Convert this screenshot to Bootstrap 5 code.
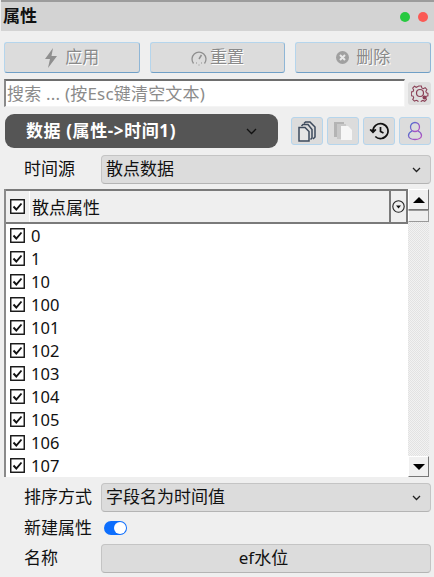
<!DOCTYPE html>
<html lang="zh">
<head>
    <meta charset="UTF-8">
    <meta name="viewport" content="width=device-width, initial-scale=1.0">
    <title>属性</title>
    <link href="https://cdn.jsdelivr.net/npm/bootstrap@5.3.0/dist/css/bootstrap.min.css" rel="stylesheet">
    <style>
        html, body {
            height: 577px;
            overflow: hidden;
        }
        body {
            font-family: "Noto Sans", "Noto Sans CJK SC", sans-serif;
            font-size: 17px;
            line-height: 1.2;
            background: #efefef;
            color: #111;
        }
        .panel-title {
            height: 31px;
            margin-left: 1px;
            padding-left: 2px;
            padding-right: 6px;
            background: #d3d3d3;
            border-top: 2px solid #9c9c9c;
            font-weight: 700;
            font-size: 17px;
        }
        .dot-group {
            gap: 8px;
        }
        .dot {
            width: 10px;
            height: 10px;
            border-radius: 50%;
        }
        .dot-green { background: #27c940; }
        .dot-red { background: #fb5a55; }
        .action-row {
            padding: 11px 3px 0 4px;
            gap: 10px;
        }
        .action-btn {
            flex: 1 1 0;
            height: 31px;
            background: #dcdcdc;
            border: 1px solid #b5d5ec;
            border-bottom-color: #6f9fc6;
            border-right-color: #8fb6d6;
            border-radius: 3px;
            color: #8a8a8a;
            font-size: 17px;
            gap: 7px;
            text-shadow: 1px 1px 0 #fff;
        }
        .action-btn.tight {
            gap: 3px;
        }
        .search-row {
            padding: 6px 3px 0 4px;
            gap: 3px;
        }
        .search-box {
            width: 401px;
            height: 28px;
            background: #fff;
            border: 1px solid #f4f4f4;
            border-top: 2px solid #6e6e6e;
            border-left: 2px solid #8a8a8a;
            padding-left: 1px;
            color: #8b8b8b;
            font-size: 17px;
            letter-spacing: .2px;
            line-height: 25px;
            white-space: nowrap;
        }
        .gear-btn {
            width: 23px;
            height: 23px;
            background: #dedede;
            border-radius: 3px;
        }
        .data-row {
            padding: 7px 3px 0 5px;
        }
        .data-pill {
            width: 273px;
            height: 34px;
            background: #555;
            border-radius: 9px;
            color: #fff;
            font-weight: 700;
            font-size: 17px;
            letter-spacing: .6px;
            padding-left: 21px;
            padding-right: 21px;
        }
        .icon-group {
            gap: 4px;
            margin-top: 3px;
            margin-left: 13px;
        }
        .icon-btn {
            width: 32px;
            height: 28px;
            background: #dcdcdc;
            border: 1px solid #b5d5ec;
            border-radius: 3px;
        }
        .field-row {
            padding-left: 24px;
            padding-right: 3px;
        }
        .field-label {
            width: 77px;
            flex: none;
            font-size: 17px;
        }
        .field-value {
            flex: 1;
            height: 29px;
            background: #dcdcdc;
            border: 1px solid #c4c4c4;
            border-bottom-color: #b4b4b4;
            border-radius: 4px;
            padding-left: 4px;
            padding-right: 9px;
            font-size: 17px;
        }
        .time-row {
            margin-top: 7px;
        }
        .sort-row {
            margin-top: 6px;
        }
        .toggle-row {
            height: 32px;
        }
        .attr-table {
            margin-top: 5px;
            margin-left: 4px;
            margin-right: 5px;
            height: 288px;
            overflow: hidden;
        }
        .attr-main {
            width: 404px;
            flex: none;
            background: #fff;
            border-left: 2px solid #8a8a8a;
        }
        .attr-head {
            height: 35px;
            background: #efefef;
            border-top: 2px solid #7a7a7a;
            border-bottom: 2px solid #7a7a7a;
            border-right: 2px solid #7a7a7a;
        }
        .head-check {
            width: 24px;
            height: 100%;
            padding-left: 4px;
            border-right: 1px solid #fff;
        }
        .head-text {
            flex: 1;
            padding-left: 2px;
            padding-top: 3px;
        }
        .head-menu {
            width: 17px;
            height: 100%;
            border-left: 2px solid #7a7a7a;
        }
        .attr-rows {
            height: 253px;
        }
        .attr-row {
            height: 23px;
            padding-left: 4px;
            gap: 6px;
            font-size: 16.500px;
        }
        .tick {
            width: 15px;
            height: 15px;
            flex: none;
            display: block;
        }
        .attr-scroll {
            width: 21px;
            flex: none;
            background-color: #f2f2f2;
            background-image: linear-gradient(45deg, #e2e2e2 25%, transparent 25%, transparent 75%, #e2e2e2 75%), linear-gradient(45deg, #e2e2e2 25%, transparent 25%, transparent 75%, #e2e2e2 75%);
            background-size: 2px 2px;
            background-position: 0 0, 1px 1px;
        }
        .scroll-btn {
            height: 21px;
            background: #f0f0f0;
            border: 1px solid #fff;
            border-right-color: #777;
            border-bottom-color: #777;
            font-size: 0;
        }
        .scroll-thumb {
            height: 12px;
            background: #efefef;
            border: 1px solid #fff;
            border-bottom-color: #999;
            border-right-color: #999;
            border-top-color: #999;
        }
        .tri-up {
            border-left: 6px solid transparent;
            border-right: 6px solid transparent;
            border-bottom: 6px solid #000;
        }
        .tri-down {
            border-left: 6px solid transparent;
            border-right: 6px solid transparent;
            border-top: 6px solid #000;
        }
        .toggle-track {
            width: 23px;
            height: 14px;
            margin-left: 3px;
            background: #0d6efd;
            border-radius: 7px;
            padding-right: 1px;
        }
        .toggle-knob {
            width: 12px;
            height: 12px;
            background: #fff;
            border-radius: 50%;
        }
    </style>
</head>

<body>
    <!-- Title -->
    <div class="panel-title d-flex align-items-center justify-content-between">
        <span>属性</span>
        <span class="dot-group d-flex">
            <span class="dot dot-green"></span>
            <span class="dot dot-red"></span>
        </span>
    </div>

    <!-- Actions -->
    <div class="action-row d-flex">
        <div class="action-btn d-flex align-items-center justify-content-center">
            <svg width="14" height="20" viewBox="0 0 14 20"><path d="M9 0 1 11h5l-2 9 9-12H7.500z" fill="#8f8f8f"/></svg>
            <span>应用</span>
        </div>
        <div class="action-btn tight d-flex align-items-center justify-content-center">
            <svg width="16" height="16" viewBox="0 0 16 16" fill="none" stroke="#8f8f8f"><path d="M2.500 13.500A7 7 0 1 1 13.500 13.500" stroke-width="1.300"/><path d="M8 9 10.500 5" stroke-width="1.500"/><path d="M5 13h1M7.500 15h1M10 13h1" stroke-width="1.200"/></svg>
            <span>重置</span>
        </div>
        <div class="action-btn d-flex align-items-center justify-content-center">
            <svg width="13" height="13" viewBox="0 0 13 13"><circle cx="6.500" cy="6.500" r="6.500" fill="#a0a0a0"/><path d="M4 4l5 5M9 4l-5 5" stroke="#e8e8e8" stroke-width="2"/></svg>
            <span>删除</span>
        </div>
    </div>

    <!-- Search -->
    <div class="search-row d-flex align-items-center">
        <div class="search-box">搜索 ... (按Esc键清空文本)</div>
        <div class="gear-btn d-flex align-items-center justify-content-center">
            <svg width="18" height="18" viewBox="0 0 18 18" fill="none" stroke="#8a3f55" stroke-width="1.200"><path d="M7.500 1h3l.5 2.200 1.800.8 2-1.200 2 2.200-1.200 2 .7 1.800 1.700.5v2.900l-2 .6-.7 1.700 1 1.900-2 2-2-1-1.800.7-.5 1.800h-3l-.5-2-1.800-.7-2 1.100-2-2 1.100-2-.7-1.800-2-.5V7.800l2-.5.7-1.800-1.100-2 2-2.200 2 1.200 1.800-.8z" transform="translate(1.100 1.100) scale(.88)"/><circle cx="9" cy="9" r="3.500"/><circle cx="13.500" cy="13.500" r="2" fill="#8a3f55" stroke="none"/></svg>
        </div>
    </div>

    <!-- Data selector -->
    <div class="data-row d-flex align-items-start">
        <div class="data-pill d-flex align-items-center justify-content-between">
            <span>数据 (属性-&gt;时间1)</span>
            <svg width="11" height="7" viewBox="0 0 11 7" fill="none" stroke="#111" stroke-width="1.300"><path d="M1 1l4.500 4.500L10 1"/></svg>
        </div>
        <div class="icon-group d-flex">
            <div class="icon-btn d-flex align-items-center justify-content-center">
                <svg width="18" height="21" viewBox="0 0 18 21" fill="none" stroke="#3d4a5c" stroke-width="1.500"><path d="M6 2.500 7.500 1H12l5 5v10l-2 2"/><path d="M3.500 5 5 3.500h5l4 5V17l-1.500 1.500"/><path d="M1 6.500h6l4 4V20H1z" fill="#e6e6e6"/></svg>
            </div>
            <div class="icon-btn d-flex align-items-center justify-content-center">
                <svg width="20" height="20" viewBox="0 0 20 20"><rect x="1" y="1" width="10" height="15" fill="#b4b4b4"/><rect x="4" y="3" width="9" height="15" fill="#c8c8c8"/><path d="M8 5h7l4 4v10H8z" fill="#f6f6f6"/></svg>
            </div>
            <div class="icon-btn d-flex align-items-center justify-content-center">
                <svg width="20" height="18" viewBox="0 0 20 18" fill="none" stroke="#111" stroke-width="1.700"><path d="M4 9a7.500 7.500 0 1 1 2.300 5.500"/><path d="M1 7.500l3 3 3-3" stroke-width="1.300" fill="#111"/><path d="M11.500 5v4.500l3 1.500"/></svg>
            </div>
            <div class="icon-btn d-flex align-items-center justify-content-center">
                <svg width="16" height="20" viewBox="0 0 16 20" fill="none" stroke-width="1.300"><defs><linearGradient id="pp" x1="0" y1="0" x2="1" y2="1"><stop offset="0" stop-color="#4d6fd0"/><stop offset="1" stop-color="#c04cc0"/></linearGradient></defs><circle cx="8" cy="6" r="4.500" stroke="url(#pp)"/><path d="M5 10C3 11 1.500 12.500 1.500 14.500 1.500 17 4.500 18.500 8 18.500S14.500 17 14.500 14.500C14.500 12.500 13 11 11 10" stroke="url(#pp)"/></svg>
            </div>
        </div>
    </div>

    <!-- Time source -->
    <div class="field-row time-row d-flex align-items-center">
        <div class="field-label">时间源</div>
        <div class="field-value d-flex align-items-center justify-content-between">
            <span>散点数据</span>
            <svg width="9" height="6" viewBox="0 0 9 6" fill="none" stroke="#222" stroke-width="1.300"><path d="M1 1l3.500 3.500L8 1"/></svg>
        </div>
    </div>

    <!-- Attribute table -->
    <div class="attr-table d-flex">
        <div class="attr-main">
            <div class="attr-head d-flex align-items-center">
                <div class="head-check d-flex align-items-center">
                    <svg class="tick" viewBox="0 0 15 15"><rect x=".75" y=".75" width="13.500" height="13.500" fill="#fff" stroke="#111" stroke-width="1.400"/><path d="M3.500 7.500 6.300 10.500 11.500 4.500" fill="none" stroke="#111" stroke-width="1.900"/></svg>
                </div>
                <div class="head-text">散点属性</div>
                <div class="head-menu d-flex align-items-center justify-content-center">
                    <svg width="13" height="13" viewBox="0 0 13 13"><circle cx="6.500" cy="6.500" r="5.700" fill="none" stroke="#222" stroke-width="1.100"/><path d="M4 5.500h5L6.500 8.500z" fill="#111"/></svg>
                </div>
            </div>
            <div class="attr-rows" id="attr-rows"></div>
        </div>
        <div class="attr-scroll d-flex flex-column justify-content-between">
            <div>
                <div class="scroll-btn d-flex align-items-center justify-content-center"><span class="tri-up"></span></div>
                <div class="scroll-thumb"></div>
            </div>
            <div class="scroll-btn d-flex align-items-center justify-content-center"><span class="tri-down"></span></div>
        </div>
    </div>

    <!-- Sort -->
    <div class="field-row sort-row d-flex align-items-center">
        <div class="field-label">排序方式</div>
        <div class="field-value d-flex align-items-center justify-content-between">
            <span>字段名为时间值</span>
            <svg width="9" height="6" viewBox="0 0 9 6" fill="none" stroke="#222" stroke-width="1.300"><path d="M1 1l3.500 3.500L8 1"/></svg>
        </div>
    </div>

    <!-- New attribute -->
    <div class="field-row toggle-row d-flex align-items-center">
        <div class="field-label">新建属性</div>
        <div class="toggle-track d-flex align-items-center justify-content-end"><span class="toggle-knob"></span></div>
    </div>

    <!-- Name -->
    <div class="field-row d-flex align-items-center">
        <div class="field-label">名称</div>
        <div class="field-value d-flex align-items-center justify-content-center">ef水位</div>
    </div>

    <script src="https://cdn.jsdelivr.net/npm/bootstrap@5.3.0/dist/js/bootstrap.bundle.min.js"></script>
    <script>
        const names = ['0', '1', '10', '100', '101', '102', '103', '104', '105', '106', '107'];
        const rows = document.getElementById('attr-rows');
        names.forEach(name => {
            rows.innerHTML += `<div class="attr-row d-flex align-items-center">
                <svg class="tick" viewBox="0 0 15 15"><rect x=".75" y=".75" width="13.500" height="13.500" fill="#fff" stroke="#111" stroke-width="1.400"/><path d="M3.500 7.500 6.300 10.500 11.500 4.500" fill="none" stroke="#111" stroke-width="1.900"/></svg>
                <span>${name}</span>
            </div>`;
        });
    </script>
</body>
</html>
